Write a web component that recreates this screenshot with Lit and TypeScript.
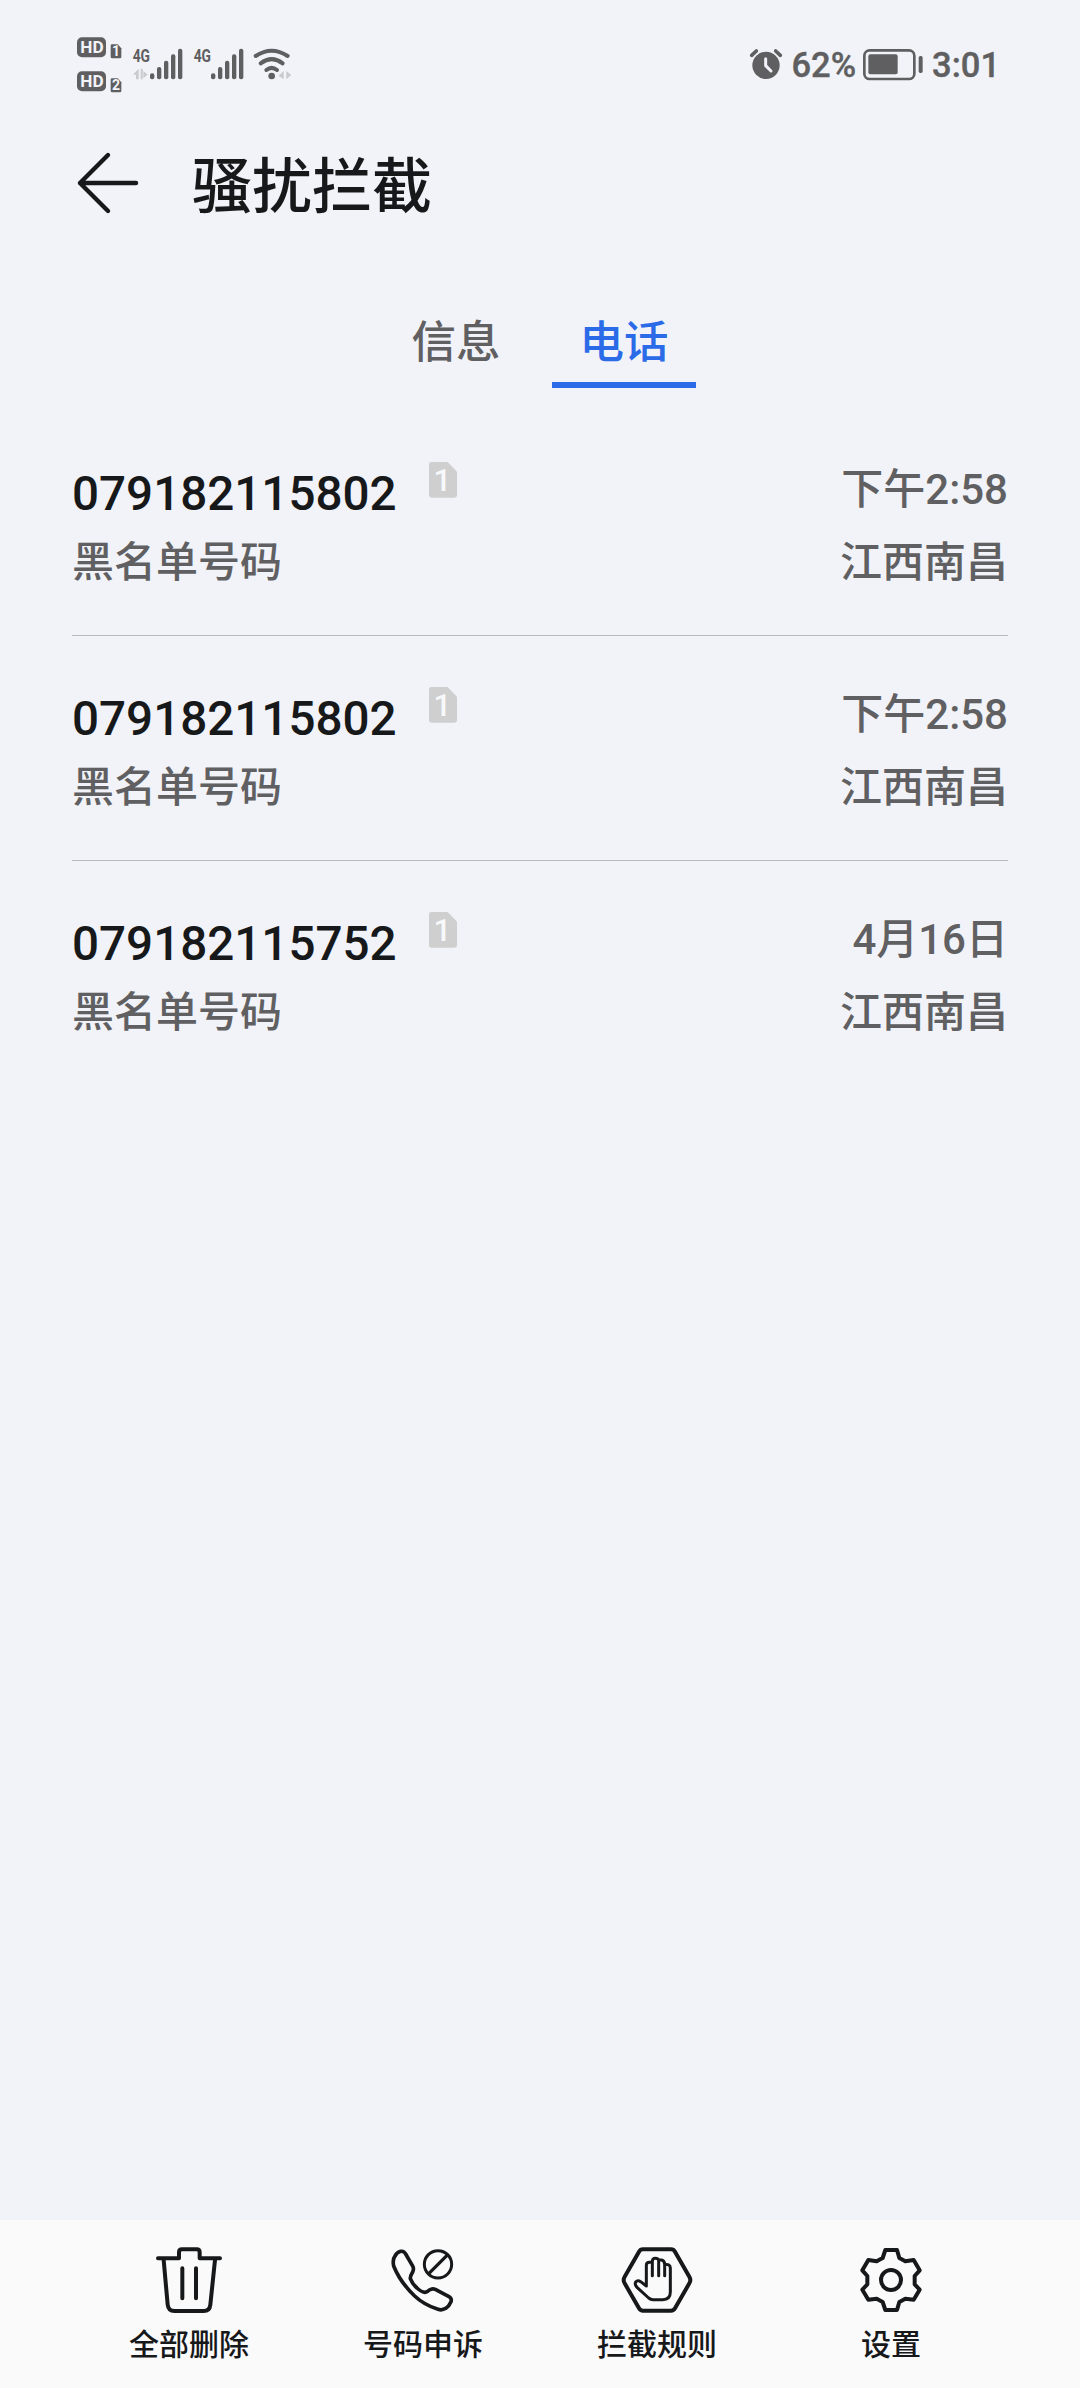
import { LitElement, html, css, svg } from "lit";
import { customElement, property, state } from "lit/decorators.js";
import { classMap } from "lit/directives/class-map.js";

interface BlockedCall {
  number: string;
  sim: number;
  time: string;
  reason: string;
  place: string;
}

const calls: BlockedCall[] = [
  { number: "079182115802", sim: 1, time: "下午2:58", reason: "黑名单号码", place: "江西南昌" },
  { number: "079182115802", sim: 1, time: "下午2:58", reason: "黑名单号码", place: "江西南昌" },
  { number: "079182115752", sim: 1, time: "4月16日", reason: "黑名单号码", place: "江西南昌" },
];

const fontStack = css`Roboto, "Noto Sans CJK SC", sans-serif`;

@customElement("status-bar")
export class StatusBar extends LitElement {
  static styles = css`
    :host {
      display: flex;
      justify-content: space-between;
      height: 130px;
      box-sizing: border-box;
      padding: 32px 80px 0 76px;
      font-family: ${fontStack};
      color: #5f5f61;
    }
    svg {
      display: block;
      fill: #5f5f61;
      overflow: visible;
    }
    .side {
      display: flex;
      align-items: flex-start;
      height: 66px;
    }
    .label {
      font-size: 34.5px;
      font-weight: 500;
      line-height: 66px;
      white-space: nowrap;
      -webkit-text-stroke: 0.4px #5f5f61;
    }
    .percent {
      margin: 0 7px 0 8px;
    }
    .clock {
      margin-left: 8px;
    }
    .cut {
      fill: #f1f3f8;
      font-weight: 700;
    }
    .net {
      font-weight: 700;
      font-size: 53px;
    }
    .faint {
      fill: #c9cacd;
    }
    .line {
      fill: none;
      stroke: #5f5f61;
      stroke-linecap: round;
      stroke-linejoin: round;
    }
    .hand {
      fill: none;
      stroke: #f1f3f8;
      stroke-width: 9;
      stroke-linecap: round;
      stroke-linejoin: round;
    }
  `;

  private hd(n: number, dy: number) {
    return svg`<g transform="translate(0 ${dy})">
      <rect x="51" y="52" width="87" height="60" rx="15"></rect>
      <text class="cut" x="61" y="100" font-size="50" textLength="70" lengthAdjust="spacingAndGlyphs">HD</text>
      <path d="M156 73H173L184 85V111Q184 115 180 115H157Q152 115 152 110V77Q152 73 156 73Z"></path>
      <text class="cut" x="168" y="109" font-size="42" text-anchor="middle">${n}</text>
    </g>`;
  }

  private signal() {
    return svg`
      <text class="net" x="218" y="125" textLength="52" lengthAdjust="spacingAndGlyphs">4G</text>
      <rect x="270" y="160" width="13" height="18" rx="6"></rect>
      <rect x="291" y="141" width="13" height="37" rx="6"></rect>
      <rect x="312" y="122" width="13" height="56" rx="6"></rect>
      <rect x="333" y="103" width="13" height="75" rx="6"></rect>
      <rect x="354" y="86" width="13" height="92" rx="6"></rect>`;
  }

  render() {
    return html`
      <div class="side">
        <svg width="56" height="66" viewBox="48 36 168 198">${this.hd(1, 0)}${this.hd(2, 102)}</svg>
        <svg width="61" height="66" viewBox="216 36 183 198">
          ${this.signal()}
          <path class="faint" d="M236 146V178H228V164H219ZM242 146H248V178H242ZM250 152L263 164L250 174Z"></path>
        </svg>
        <svg width="60" height="66" viewBox="216 36 180 198">${this.signal()}</svg>
        <svg width="42" height="66" viewBox="577 36 126 198">
          <g class="line" stroke-width="12">
            <path d="M585 108Q633 76 681 108"></path>
            <path d="M600 130Q633 105 666 130"></path>
            <path d="M617 150Q633 137 649 150"></path>
          </g>
          <circle cx="633" cy="168" r="10"></circle>
          <path class="faint" d="M669 153V178L654 167ZM677 153L692 165L677 178Z"></path>
        </svg>
      </div>
      <div class="side">
        <svg width="34" height="66" viewBox="60 6 102 198">
          <circle cx="111" cy="106" r="41"></circle>
          <g class="line" stroke-width="11">
            <path d="M68 76L82 63"></path>
            <path d="M140 63L154 76"></path>
          </g>
          <path class="hand" d="M110 86V107L126 123"></path>
        </svg>
        <span class="label percent">62%</span>
        <svg width="61" height="66" viewBox="402 6 183 198">
          <rect class="line" x="406" y="61" width="150" height="86" rx="16" stroke-width="8"></rect>
          <rect x="418" y="73" width="88" height="60" rx="6"></rect>
          <rect x="569" y="78" width="12" height="51" rx="5"></rect>
        </svg>
        <span class="label clock">3:01</span>
      </div>
    `;
  }
}

@customElement("call-row")
export class CallRow extends LitElement {
  @property({ attribute: false }) call!: BlockedCall;

  static styles = css`
    :host {
      display: flex;
      justify-content: space-between;
      height: 225px;
      box-sizing: border-box;
      padding-top: 52px;
      font-family: ${fontStack};
      font-size: 42px;
      font-weight: 500;
      color: #606062;
    }
    .caller,
    .info {
      display: flex;
      flex-direction: column;
    }
    .info {
      align-items: flex-end;
    }
    .top {
      display: flex;
      align-items: flex-start;
      gap: 32px;
      height: 65px;
    }
    .number {
      font-size: 47.6px;
      line-height: 65px;
      color: #17181a;
    }
    .sub {
      line-height: 72px;
    }
    .time {
      height: 65px;
      line-height: 56px;
    }
    .sim {
      display: block;
      fill: #cfcfcf;
    }
    .digit {
      fill: #f7f8fa;
      font-size: 94px;
    }
  `;

  render() {
    const c = this.call;
    return html`
      <div class="caller">
        <div class="top">
          <span class="number">${c.number}</span>
          <svg class="sim" width="28" height="36" viewBox="1104 66 84 108">
            <path d="M1111 66H1160L1188 95V166Q1188 173 1181 173H1111Q1104 173 1104 166V73Q1104 66 1111 66Z"></path>
            <text class="digit" x="1144" y="154" text-anchor="middle">${c.sim}</text>
          </svg>
        </div>
        <span class="sub">${c.reason}</span>
      </div>
      <div class="info">
        <span class="time">${c.time}</span>
        <span class="sub">${c.place}</span>
      </div>
    `;
  }
}

const toolbar = [
  {
    label: "全部删除",
    box: "159 132 216 216",
    icon: svg`
      <path d="M174 175H237V157Q237 148 246 148H290Q299 148 299 157V175H360"></path>
      <path d="M191 180L203 314Q205 333 223 333H311Q329 333 331 314L345 180"></path>
      <path d="M247 205V295M288 205V295"></path>`,
  },
  {
    label: "号码申诉",
    box: "861 132 216 216",
    icon: svg`
      <path stroke-width="11" d="M917 162L939 200Q942 207 938 216Q930 229 931 236Q937 252 951 264Q965 277 975 277Q982 276 988 270Q997 264 1006 268L1047 290Q1056 295 1053 305Q1047 319 1037 325Q1027 332 1014 328Q971 314 944 288Q900 246 881 198Q877 178 885 168Q891 157 902 154Q912 152 917 162Z"></path>
      <circle stroke-width="9" cx="1014" cy="193" r="41"></circle>
      <path stroke-width="10" d="M987 220L1041 166"></path>`,
  },
  {
    label: "拦截规则",
    box: "183 132 216 216",
    icon: svg`
      <path d="M249 148H333Q341 148 345 155L388 230Q394 240 388 250L345 325Q341 332 333 332H249Q241 332 237 325L194 250Q188 240 194 230L237 155Q241 148 249 148Z"></path>
      <path stroke-width="9" d="M259 258V196Q259 187 268 187H277V183Q278 175 286 175Q294 175 296 180Q299 180 305 180Q314 182 314 194Q331 191 331 204V276Q331 299 308 299H279Q272 299 266 294L231 262Q223 253 227 246Q233 239 242 245L259 258M277 185V227M296 180V227M314 190V227"></path>`,
  },
  {
    label: "设置",
    box: "885 132 216 216",
    icon: svg`
      <path d="M976 150H1011L1018 174L1036 184L1061 180L1079 211L1064 228V253L1079 269L1061 299L1036 296L1018 306L1011 330H976L968 306L950 296L925 299L907 269L922 253V228L907 211L925 180L950 184L968 174Z"></path>
      <circle cx="993" cy="240" r="30"></circle>`,
  },
];

@customElement("app-root")
export class AppRoot extends LitElement {
  @state() private tab = 1;

  static styles = css`
    :host {
      display: flex;
      flex-direction: column;
      height: 2388px;
      background: #f1f3f8;
      font-family: ${fontStack};
      color: #17181a;
    }
    .header {
      display: flex;
      align-items: flex-start;
      gap: 48px;
      height: 150px;
      padding: 17px 72px 0;
      box-sizing: border-box;
    }
    .back {
      display: block;
      fill: none;
      stroke: #17181a;
      stroke-width: 4.4;
      stroke-linecap: round;
      stroke-linejoin: round;
    }
    .title {
      margin: 0;
      font-size: 60px;
      font-weight: 500;
      line-height: 82px;
    }
    .tabs {
      display: flex;
      justify-content: center;
      gap: 24px;
      height: 130px;
      padding-top: 15px;
      box-sizing: border-box;
    }
    .tab {
      width: 144px;
      height: 93px;
      box-sizing: border-box;
      text-align: center;
      font-size: 44.5px;
      font-weight: 500;
      line-height: 96px;
      color: #606062;
      border-bottom: 6px solid transparent;
    }
    .tab.active {
      color: #2b6be8;
      border-bottom-color: #2b6be8;
    }
    .list {
      flex: 1;
      padding: 0 72px;
    }
    .item + .item {
      box-shadow: inset 0 1px 0 #b6b9c0;
    }
    .item {
      display: block;
    }
    .bar {
      display: grid;
      grid-template-columns: repeat(4, 1fr);
      height: 168px;
      padding: 24px 72px 0;
      box-sizing: border-box;
      background: #fafafa;
    }
    .action {
      display: flex;
      flex-direction: column;
      align-items: center;
      gap: 8px;
    }
    .icon {
      display: block;
      fill: none;
      stroke: #17181a;
      stroke-width: 12;
      stroke-linecap: round;
      stroke-linejoin: round;
    }
    .caption {
      font-size: 30px;
      font-weight: 500;
      line-height: 42px;
    }
  `;

  render() {
    return html`
      <status-bar></status-bar>
      <header class="header">
        <svg class="back" width="72" height="72" viewBox="0 0 72 72">
          <path d="M64 36H8M36 8L8 36L36 64"></path>
        </svg>
        <h1 class="title">骚扰拦截</h1>
      </header>
      <nav class="tabs">
        ${["信息", "电话"].map(
          (t, i) => html`<div
            class=${classMap({ tab: true, active: i === this.tab })}
            @click=${() => (this.tab = i)}
          >${t}</div>`
        )}
      </nav>
      <main class="list">
        ${calls.map((c) => html`<div class="item"><call-row .call=${c}></call-row></div>`)}
      </main>
      <footer class="bar">
        ${toolbar.map(
          (a) => html`<div class="action">
            <svg class="icon" width="72" height="72" viewBox=${a.box}>${a.icon}</svg>
            <span class="caption">${a.label}</span>
          </div>`
        )}
      </footer>
    `;
  }
}
